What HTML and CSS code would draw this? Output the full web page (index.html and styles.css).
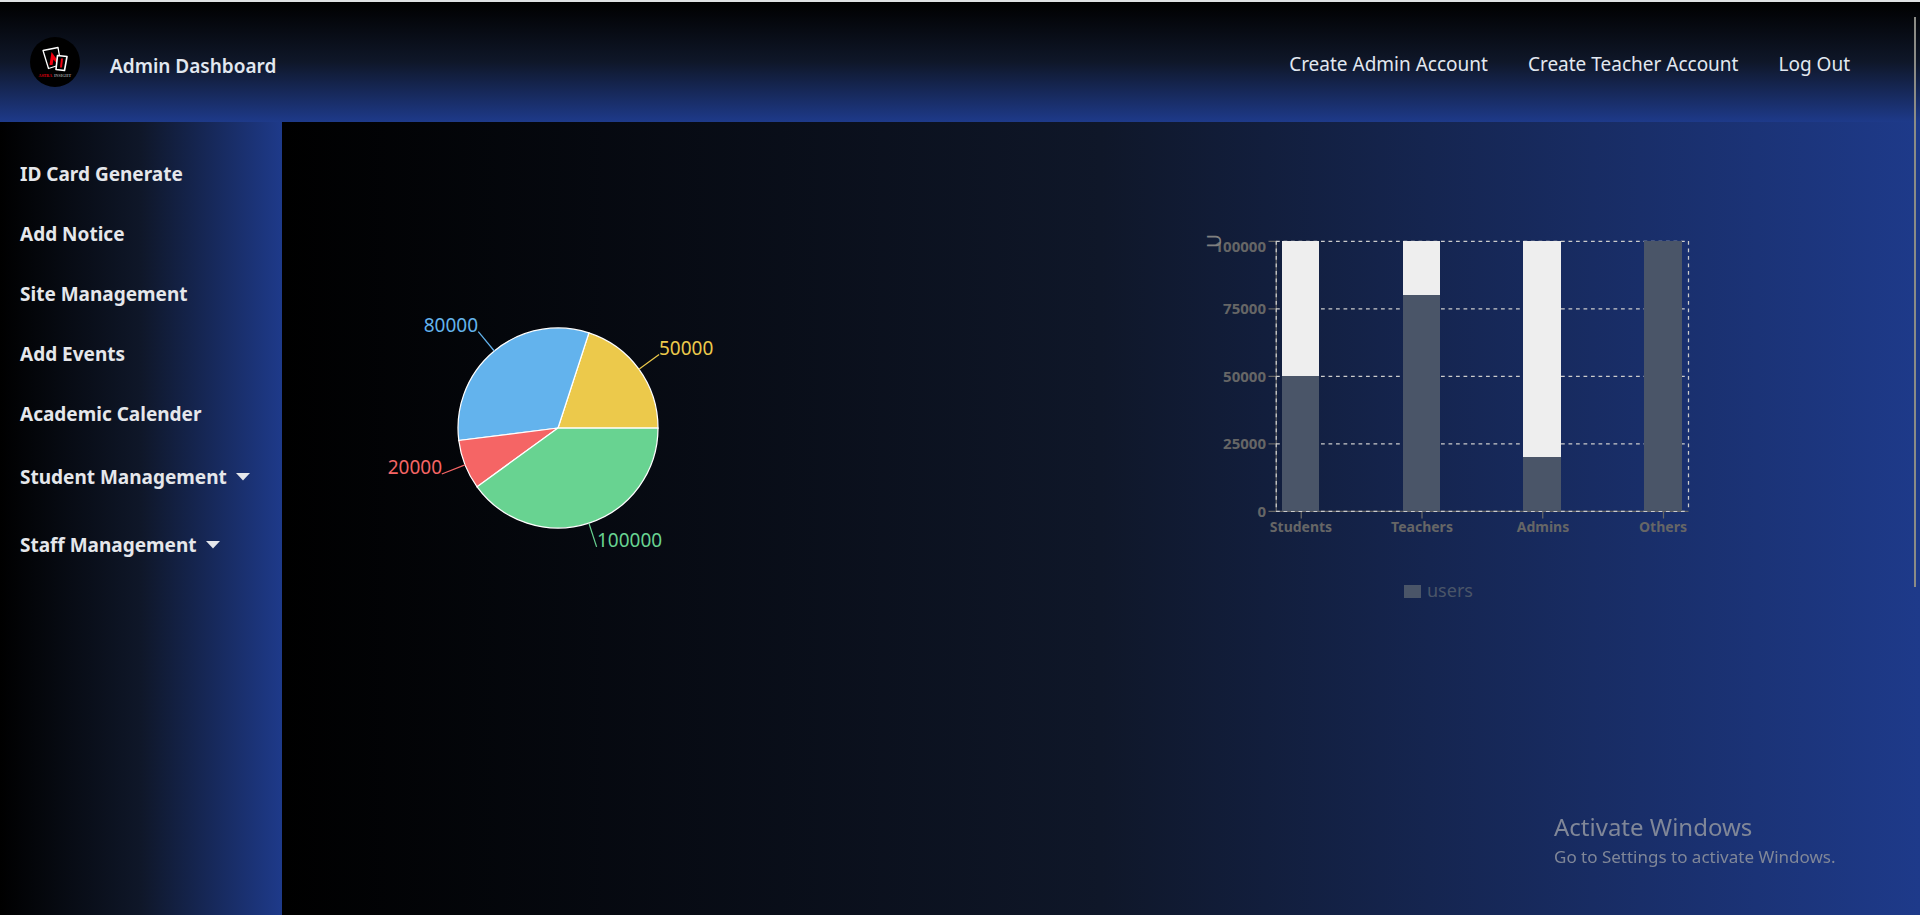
FILE: index.html
```html
<!DOCTYPE html>
<html lang="en">
<head>
<meta charset="utf-8">
<title>Admin Dashboard</title>
<link rel="stylesheet" href="styles.css">
</head>
<body>
<header class="header">
  <svg class="logo" viewBox="0 0 50 50" role="img" aria-label="Astra Insight">
    <circle cx="25" cy="25" r="25" fill="#000"/>
    <path d="M13 13.500 28 10.500 31 27.500 18.500 31.500Z" fill="#000" stroke="#fff" stroke-width="1.300" stroke-linejoin="round"/>
    <path d="M19.500 28 21.500 15 27 22.500V27L23.500 22.500 22.500 28Z" fill="#f00010"/>
    <path d="M27.500 18.500 37 19.500 34.500 33.500 26 32.500Z" fill="#000" stroke="#fff" stroke-width="1.600" stroke-linejoin="round"/>
    <path d="M31 21.500h2l-1 9h-2z" fill="#f00010"/>
    <text x="8.500" y="40" class="logo-text logo-red">ASTRA</text>
    <text x="24" y="40" class="logo-text logo-gray">INSIGHT</text>
  </svg>
  <h1 class="title">Admin Dashboard</h1>
  <nav class="top-nav">
    <a href="#">Create Admin Account</a>
    <a href="#">Create Teacher Account</a>
    <a href="#">Log Out</a>
  </nav>
</header>
<div class="layout">
  <aside class="sidebar">
    <a class="side-item" href="#">ID Card Generate</a>
    <a class="side-item" href="#">Add Notice</a>
    <a class="side-item" href="#">Site Management</a>
    <a class="side-item" href="#">Add Events</a>
    <a class="side-item" href="#">Academic Calender</a>
    <button class="side-item side-menu" type="button">Student Management
      <svg class="caret" viewBox="0 0 14 8" aria-hidden="true"><path d="M0 0h14L7 7.500z"/></svg></button>
    <button class="side-item side-menu" type="button">Staff Management
      <svg class="caret" viewBox="0 0 14 8" aria-hidden="true"><path d="M0 0h14L7 7.500z"/></svg></button>
  </aside>
  <main class="charts">
    <svg class="pie" viewBox="-250 -250 500 500" role="img" aria-label="Users by group">
      <g stroke="#fff" stroke-width="1.250">
        <path fill="#ecc94b" d="M0 0 100 0A100 100 0 0 0 30.900 -95.100Z"/>
        <path fill="#63b3ed" d="M0 0 30.900 -95.100A100 100 0 0 0 -99.200 12.500Z"/>
        <path fill="#f56565" d="M0 0 -99.200 12.500A100 100 0 0 0 -80.900 58.800Z"/>
        <path fill="#68d391" d="M0 0 -80.900 58.800A100 100 0 0 0 100 0Z"/>
      </g>
      <g stroke-width="1.250">
        <path stroke="#ecc94b" d="M80.900 -58.800 101.100 -73.500"/>
        <path stroke="#63b3ed" d="M-63.700 -77 -79.700 -96.300"/>
        <path stroke="#f56565" d="M-93 36.800 -116.200 46"/>
        <path stroke="#68d391" d="M30.900 95.100 38.600 118.900"/>
      </g>
      <g class="pie-labels">
        <text x="101" y="-73" fill="#ecc94b">50000</text>
        <text x="-80" y="-96" fill="#63b3ed" text-anchor="end">80000</text>
        <text x="-116" y="46" fill="#f56565" text-anchor="end">20000</text>
        <text x="39" y="119" fill="#68d391">100000</text>
      </g>
    </svg>
    <svg class="bars" viewBox="0 0 550 424" role="img" aria-label="Users bar chart">
      <g stroke="#666" stroke-width="1.250">
        <path d="M100.250 25V295.250M100 295.250H512.500"/>
        <path d="M92.500 25.250h8M92.500 92.750h8M92.500 160.250h8M92.500 227.750h8M92.500 295.250h8"/>
        <path d="M125.250 295v7.500M246 295v7.500M366.750 295v7.500M487.500 295v7.500"/>
      </g>
      <g stroke="#ccc" stroke-width="1.250" stroke-dasharray="3.750">
        <path d="M100 25.250H512.500"/>
        <path d="M100 92.750H512.500"/>
        <path d="M100 160.250H512.500"/>
        <path d="M100 227.750H512.500"/>
        <path d="M100 295.250H512.500"/>
        <path d="M100.250 25V295"/>
        <path d="M512.500 25V295"/>
      </g>
      <g fill="#eee">
        <path d="M106 25h37v270h-37zM227 25h37v270h-37zM347 25h38v270h-38zM468 25h38v270h-38z"/>
      </g>
      <g fill="#4a5568">
        <path d="M106 160h37v135h-37zM227 79h37v216h-37zM347 241h38v54h-38zM468 25h38v270h-38z"/>
        <path d="M228 369h17v13h-17z"/>
      </g>
      <g class="ticks" text-anchor="end">
        <text x="90" y="36">100000</text>
        <text x="90" y="98">75000</text>
        <text x="90" y="166">50000</text>
        <text x="90" y="233">25000</text>
        <text x="90" y="301">0</text>
      </g>
      <g class="ticks categories" text-anchor="middle">
        <text x="125" y="316">Students</text>
        <text x="246" y="316">Teachers</text>
        <text x="367" y="316">Admins</text>
        <text x="487" y="316">Others</text>
      </g>
      <text class="axis-label" transform="translate(45 32) rotate(-90)">U</text>
      <text class="legend" x="251" y="381">users</text>
    </svg>
  </main>
</div>
<div class="scroll-thumb"></div>
<div class="watermark">
  <p class="watermark-title">Activate Windows</p>
  <p class="watermark-text">Go to Settings to activate Windows.</p>
</div>
</body>
</html>
```
FILE: styles.css
```css
* { box-sizing: border-box; }
body {
  margin: 0;
  min-height: 100vh;
  display: flex;
  flex-direction: column;
  font-family: "Noto Sans", "Open Sans", sans-serif;
  font-size: 19px;
  color: #e2e8f0;
  background: #000;
  overflow: hidden;
}
a { color: inherit; text-decoration: none; }
.header {
  display: flex;
  align-items: center;
  height: 122px;
  padding: 0 70px 0 30px;
  border-top: 2px solid #dfe1e3;
  background: linear-gradient(to bottom, #000, #0f1729, #1e3a8a);
}
.logo { width: 50px; height: 50px; }
.logo-text { font-family: "Liberation Serif", serif; font-size: 4px; font-weight: 700; }
.logo-red { fill: #e00010; }
.logo-gray { fill: #999; }
.title { margin: 8px 0 0 30px; font-size: 19px; font-weight: 600; }
.top-nav { display: flex; gap: 40px; margin: 4px 0 0 auto; }
.layout { flex: 1; display: flex; }
.sidebar {
  display: flex;
  flex-direction: column;
  width: 282px;
  padding: 22px 20px;
  background: linear-gradient(to right, #000, #0f1729, #1e3a8a);
}
.side-item {
  display: flex;
  align-items: center;
  height: 60px;
  font-weight: 700;
  color: #e5e7eb;
}
.side-menu {
  height: 68px;
  padding: 0 0 2px;
  gap: 9px;
  border: 0;
  background: none;
  font-family: inherit;
  font-size: 19px;
  white-space: nowrap;
}
.caret { width: 14px; height: 8px; fill: currentColor; }
.charts {
  flex: 1;
  display: flex;
  align-items: center;
  align-content: flex-start;
  flex-wrap: wrap;
  justify-content: space-between;
  padding: 56px 194px 0 26px;
  background: linear-gradient(to right, #000, #0f1729, #1e3a8a);
}
.pie { width: 500px; height: 500px; }
.bars { width: 550px; height: 424px; }
.pie-labels { font-size: 19px; }
.ticks { font-size: 15px; font-weight: 700; fill: #666; }
.categories { font-size: 14px; }
.axis-label { font-size: 19px; fill: #808080; }
.legend { font-size: 18px; fill: #4a5568; }
.scroll-thumb {
  position: fixed;
  top: 17px;
  right: 4px;
  width: 2px;
  height: 570px;
  background: #8b8b86;
}
.watermark {
  position: fixed;
  right: 82px;
  bottom: 44px;
  width: 284px;
  color: #808798;
  white-space: nowrap;
}
.watermark p { margin: 0; }
.watermark-title { font-size: 24px; line-height: 32px; }
.watermark-text { font-size: 17px; line-height: 28px; }
```
